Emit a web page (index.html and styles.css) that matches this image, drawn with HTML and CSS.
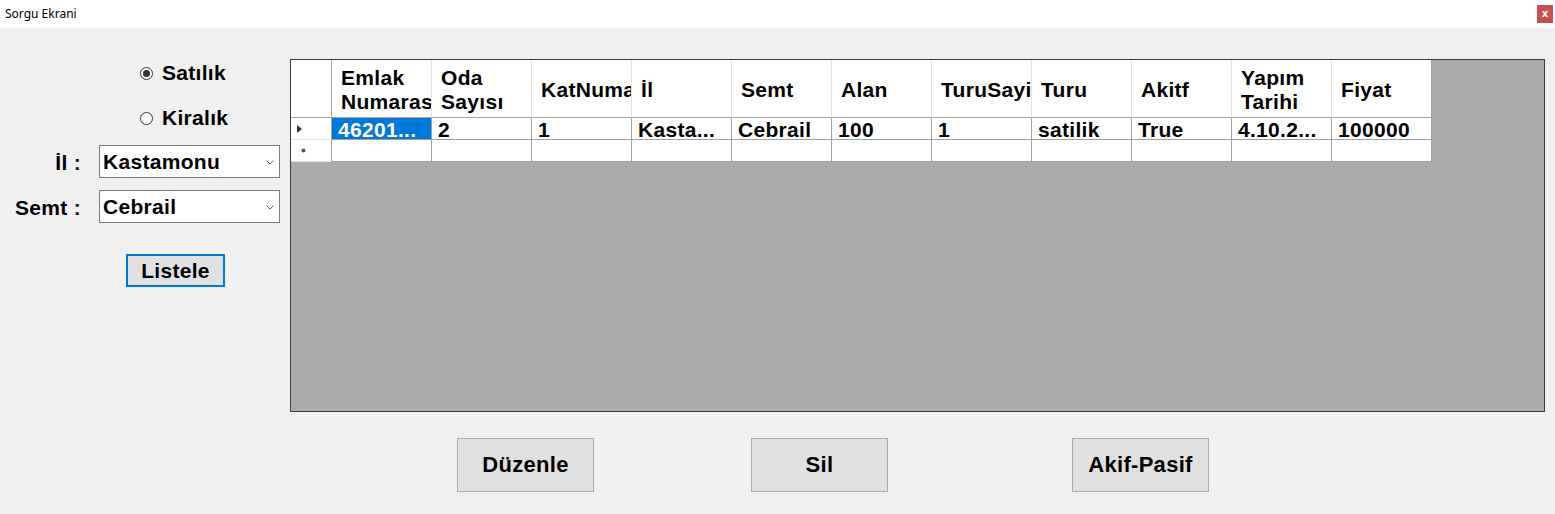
FILE: index.html
```html
<!DOCTYPE html>
<html lang="tr">
<head>
<meta charset="utf-8">
<title>Sorgu Ekrani</title>
<link rel="stylesheet" href="styles.css">
</head>
<body>
<header class="titlebar">
  <span class="title">Sorgu Ekrani</span>
  <span class="close">x</span>
</header>
<div class="main">
  <aside class="filters">
    <div class="radio"><span class="dot checked"></span><span>Satılık</span></div>
    <div class="radio second"><span class="dot"></span><span>Kiralık</span></div>
    <div class="field first">
      <span class="lbl">İl :</span>
      <div class="combo"><span>Kastamonu</span><svg class="chev" width="8" height="5" viewBox="0 0 8 5"><polyline points="0.5,0.5 4,4 7.5,0.5" fill="none" stroke="#606060" stroke-width="1"/></svg></div>
    </div>
    <div class="field">
      <span class="lbl">Semt :</span>
      <div class="combo"><span>Cebrail</span><svg class="chev" width="8" height="5" viewBox="0 0 8 5"><polyline points="0.5,0.5 4,4 7.5,0.5" fill="none" stroke="#606060" stroke-width="1"/></svg></div>
    </div>
    <button class="btn listele">Listele</button>
  </aside>
  <section class="gridview">
    <div class="table">
      <div class="corner"></div>
      <div class="th">Emlak Numarası</div>
      <div class="th">Oda Sayısı</div>
      <div class="th">KatNumarası</div>
      <div class="th">İl</div>
      <div class="th">Semt</div>
      <div class="th">Alan</div>
      <div class="th">TuruSayisi</div>
      <div class="th">Turu</div>
      <div class="th">Akitf</div>
      <div class="th">Yapım Tarihi</div>
      <div class="th">Fiyat</div>

      <div class="rh"><svg width="5" height="8" viewBox="0 0 5 8"><polygon points="0,0 5,4 0,8" fill="#333"/></svg></div>
      <div class="td selected">46201...</div>
      <div class="td">2</div>
      <div class="td">1</div>
      <div class="td">Kasta...</div>
      <div class="td">Cebrail</div>
      <div class="td">100</div>
      <div class="td">1</div>
      <div class="td">satilik</div>
      <div class="td">True</div>
      <div class="td">4.10.2...</div>
      <div class="td">100000</div>

      <div class="rh new"><svg width="5" height="5" viewBox="0 0 5 5"><circle cx="2.5" cy="2.5" r="2" fill="#555"/></svg></div>
      <div class="td"></div>
      <div class="td"></div>
      <div class="td"></div>
      <div class="td"></div>
      <div class="td"></div>
      <div class="td"></div>
      <div class="td"></div>
      <div class="td"></div>
      <div class="td"></div>
      <div class="td"></div>
      <div class="td"></div>
    </div>
  </section>
</div>
<div class="actions">
  <button class="btn action duzenle">Düzenle</button>
  <button class="btn action sil">Sil</button>
  <button class="btn action">Akif-Pasif</button>
</div>
</body>
</html>
```

FILE: styles.css
```css
* { box-sizing: border-box; }
html, body {
  margin: 0;
  padding: 0;
  background: #f0f0f0;
  font-family: "Liberation Sans", Arial, sans-serif;
  font-weight: bold;
  font-size: 21px;
  letter-spacing: 0.3px;
  color: #000;
}
.titlebar {
  height: 28px;
  background: #fff;
  display: flex;
  justify-content: space-between;
  align-items: flex-start;
}
.title {
  font-family: "Noto Sans", sans-serif;
  font-weight: normal;
  font-size: 12px;
  letter-spacing: 0;
  line-height: 28px;
  padding-left: 5px;
}
.close {
  margin-top: 5px;
  margin-right: 2px;
  width: 16px;
  height: 18px;
  background: #c75050;
  color: #fff;
  font-family: "DejaVu Sans", sans-serif;
  font-size: 10px;
  font-weight: bold;
  letter-spacing: 0;
  line-height: 17px;
  text-align: center;
}
.main {
  display: flex;
  align-items: flex-start;
}
.filters {
  width: 290px;
  flex-shrink: 0;
  padding-top: 33px;
  display: flex;
  flex-direction: column;
}
.radio {
  height: 24px;
  margin-left: 140px;
  display: flex;
  align-items: center;
  gap: 9px;
  line-height: 24px;
}
.radio.second { margin-top: 21px; }
.dot {
  width: 13px;
  height: 13px;
  border: 1px solid #333;
  border-radius: 50%;
  background: #fff;
  position: relative;
  flex-shrink: 0;
}
.dot.checked::after {
  content: "";
  position: absolute;
  left: 2px;
  top: 2px;
  width: 7px;
  height: 7px;
  border-radius: 50%;
  background: #333;
}
.field {
  display: flex;
  align-items: center;
  margin-top: 12px;
  height: 33px;
}
.field.first { margin-top: 15px; }
.lbl {
  width: 81px;
  margin-right: 18px;
  text-align: right;
  padding-top: 2px;
}
.combo {
  width: 181px;
  height: 33px;
  background: #fff;
  border: 1px solid #7a7a7a;
  display: flex;
  align-items: center;
  justify-content: space-between;
  padding: 0 5px 0 3px;
}
.chev { margin-top: 1px; }
.btn {
  font-family: "Liberation Sans", Arial, sans-serif;
  font-weight: bold;
  letter-spacing: 0.3px;
  background: #e1e1e1;
  border: 1px solid #adadad;
  color: #000;
  padding: 0;
  margin: 0;
}
.listele {
  margin-top: 31px;
  margin-left: 126px;
  width: 99px;
  height: 33px;
  font-size: 21px;
  border: 2px solid #0078d7;
}
.gridview {
  margin-top: 31px;
  width: 1255px;
  height: 353px;
  border: 1px solid #3c3c3c;
  background: #ababab;
}
.table {
  display: grid;
  grid-template-columns: 41px repeat(11, 100px);
  grid-template-rows: 58px 22px 22px;
  width: max-content;
  background: #fff;
}
.corner {
  border-right: 1px solid #a0a0a0;
  border-bottom: 1px solid #a0a0a0;
}
.th {
  border-right: 1px solid #e3e3e3;
  border-bottom: 1px solid #a0a0a0;
  padding: 2px 0 0 9px;
  line-height: 24px;
  overflow: hidden;
  display: flex;
  align-items: center;
}
.th:nth-child(12) { border-right-color: #a0a0a0; }
.rh {
  border-right: 1px solid #a0a0a0;
  border-bottom: 1px solid #e3e3e3;
  display: flex;
  align-items: center;
  padding-left: 6px;
  padding-top: 1px;
}
.rh.new { padding-left: 10px; padding-top: 0; }
.td {
  border-right: 1px solid #a0a0a0;
  border-bottom: 1px solid #a0a0a0;
  line-height: 21px;
  padding: 1px 0 0 6px;
  white-space: nowrap;
  overflow: hidden;
}
.td.selected {
  background: #0078d7;
  color: #fff;
}
.actions {
  display: flex;
  margin-top: 26px;
  padding-left: 457px;
}
.action {
  width: 137px;
  height: 54px;
  font-size: 22px;
}
.duzenle { margin-right: 157px; }
.sil { margin-right: 184px; }
```
